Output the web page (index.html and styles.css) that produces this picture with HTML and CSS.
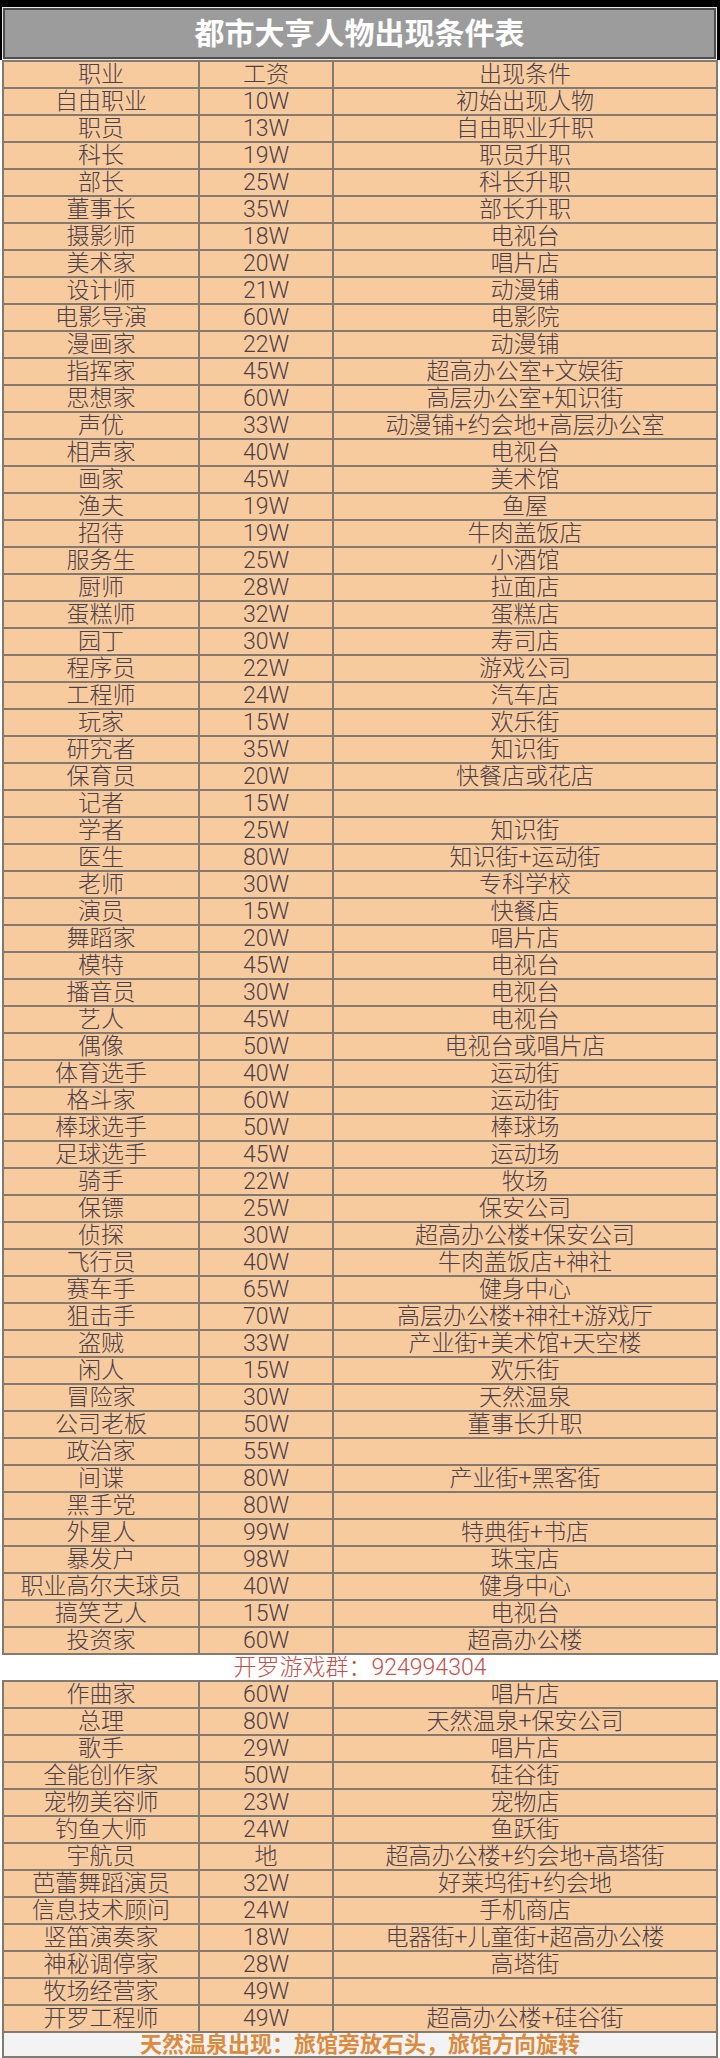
FILE: index.html
```html
<!DOCTYPE html>
<html lang="zh-CN">
<head>
<meta charset="utf-8">
<title>都市大亨人物出现条件表</title>
<link rel="stylesheet" href="styles.css">
</head>
<body>
<div class="frame">
  <div class="title"><div class="title-inner">都市大亨人物出现条件表</div></div>
</div>
<div class="tbl">
  <div class="row"><div class="c">职业</div><div class="c">工资</div><div class="c">出现条件</div></div>
  <div class="row"><div class="c">自由职业</div><div class="c">10W</div><div class="c">初始出现人物</div></div>
  <div class="row"><div class="c">职员</div><div class="c">13W</div><div class="c">自由职业升职</div></div>
  <div class="row"><div class="c">科长</div><div class="c">19W</div><div class="c">职员升职</div></div>
  <div class="row"><div class="c">部长</div><div class="c">25W</div><div class="c">科长升职</div></div>
  <div class="row"><div class="c">董事长</div><div class="c">35W</div><div class="c">部长升职</div></div>
  <div class="row"><div class="c">摄影师</div><div class="c">18W</div><div class="c">电视台</div></div>
  <div class="row"><div class="c">美术家</div><div class="c">20W</div><div class="c">唱片店</div></div>
  <div class="row"><div class="c">设计师</div><div class="c">21W</div><div class="c">动漫铺</div></div>
  <div class="row"><div class="c">电影导演</div><div class="c">60W</div><div class="c">电影院</div></div>
  <div class="row"><div class="c">漫画家</div><div class="c">22W</div><div class="c">动漫铺</div></div>
  <div class="row"><div class="c">指挥家</div><div class="c">45W</div><div class="c">超高办公室+文娱街</div></div>
  <div class="row"><div class="c">思想家</div><div class="c">60W</div><div class="c">高层办公室+知识街</div></div>
  <div class="row"><div class="c">声优</div><div class="c">33W</div><div class="c">动漫铺+约会地+高层办公室</div></div>
  <div class="row"><div class="c">相声家</div><div class="c">40W</div><div class="c">电视台</div></div>
  <div class="row"><div class="c">画家</div><div class="c">45W</div><div class="c">美术馆</div></div>
  <div class="row"><div class="c">渔夫</div><div class="c">19W</div><div class="c">鱼屋</div></div>
  <div class="row"><div class="c">招待</div><div class="c">19W</div><div class="c">牛肉盖饭店</div></div>
  <div class="row"><div class="c">服务生</div><div class="c">25W</div><div class="c">小酒馆</div></div>
  <div class="row"><div class="c">厨师</div><div class="c">28W</div><div class="c">拉面店</div></div>
  <div class="row"><div class="c">蛋糕师</div><div class="c">32W</div><div class="c">蛋糕店</div></div>
  <div class="row"><div class="c">园丁</div><div class="c">30W</div><div class="c">寿司店</div></div>
  <div class="row"><div class="c">程序员</div><div class="c">22W</div><div class="c">游戏公司</div></div>
  <div class="row"><div class="c">工程师</div><div class="c">24W</div><div class="c">汽车店</div></div>
  <div class="row"><div class="c">玩家</div><div class="c">15W</div><div class="c">欢乐街</div></div>
  <div class="row"><div class="c">研究者</div><div class="c">35W</div><div class="c">知识街</div></div>
  <div class="row"><div class="c">保育员</div><div class="c">20W</div><div class="c">快餐店或花店</div></div>
  <div class="row"><div class="c">记者</div><div class="c">15W</div><div class="c"></div></div>
  <div class="row"><div class="c">学者</div><div class="c">25W</div><div class="c">知识街</div></div>
  <div class="row"><div class="c">医生</div><div class="c">80W</div><div class="c">知识街+运动街</div></div>
  <div class="row"><div class="c">老师</div><div class="c">30W</div><div class="c">专科学校</div></div>
  <div class="row"><div class="c">演员</div><div class="c">15W</div><div class="c">快餐店</div></div>
  <div class="row"><div class="c">舞蹈家</div><div class="c">20W</div><div class="c">唱片店</div></div>
  <div class="row"><div class="c">模特</div><div class="c">45W</div><div class="c">电视台</div></div>
  <div class="row"><div class="c">播音员</div><div class="c">30W</div><div class="c">电视台</div></div>
  <div class="row"><div class="c">艺人</div><div class="c">45W</div><div class="c">电视台</div></div>
  <div class="row"><div class="c">偶像</div><div class="c">50W</div><div class="c">电视台或唱片店</div></div>
  <div class="row"><div class="c">体育选手</div><div class="c">40W</div><div class="c">运动街</div></div>
  <div class="row"><div class="c">格斗家</div><div class="c">60W</div><div class="c">运动街</div></div>
  <div class="row"><div class="c">棒球选手</div><div class="c">50W</div><div class="c">棒球场</div></div>
  <div class="row"><div class="c">足球选手</div><div class="c">45W</div><div class="c">运动场</div></div>
  <div class="row"><div class="c">骑手</div><div class="c">22W</div><div class="c">牧场</div></div>
  <div class="row"><div class="c">保镖</div><div class="c">25W</div><div class="c">保安公司</div></div>
  <div class="row"><div class="c">侦探</div><div class="c">30W</div><div class="c">超高办公楼+保安公司</div></div>
  <div class="row"><div class="c">飞行员</div><div class="c">40W</div><div class="c">牛肉盖饭店+神社</div></div>
  <div class="row"><div class="c">赛车手</div><div class="c">65W</div><div class="c">健身中心</div></div>
  <div class="row"><div class="c">狙击手</div><div class="c">70W</div><div class="c">高层办公楼+神社+游戏厅</div></div>
  <div class="row"><div class="c">盗贼</div><div class="c">33W</div><div class="c">产业街+美术馆+天空楼</div></div>
  <div class="row"><div class="c">闲人</div><div class="c">15W</div><div class="c">欢乐街</div></div>
  <div class="row"><div class="c">冒险家</div><div class="c">30W</div><div class="c">天然温泉</div></div>
  <div class="row"><div class="c">公司老板</div><div class="c">50W</div><div class="c">董事长升职</div></div>
  <div class="row"><div class="c">政治家</div><div class="c">55W</div><div class="c"></div></div>
  <div class="row"><div class="c">间谍</div><div class="c">80W</div><div class="c">产业街+黑客街</div></div>
  <div class="row"><div class="c">黑手党</div><div class="c">80W</div><div class="c"></div></div>
  <div class="row"><div class="c">外星人</div><div class="c">99W</div><div class="c">特典街+书店</div></div>
  <div class="row"><div class="c">暴发户</div><div class="c">98W</div><div class="c">珠宝店</div></div>
  <div class="row"><div class="c">职业高尔夫球员</div><div class="c">40W</div><div class="c">健身中心</div></div>
  <div class="row"><div class="c">搞笑艺人</div><div class="c">15W</div><div class="c">电视台</div></div>
  <div class="row"><div class="c">投资家</div><div class="c">60W</div><div class="c">超高办公楼</div></div>
</div>
<div class="group">开罗游戏群：924994304</div>
<div class="tbl">
  <div class="row"><div class="c">作曲家</div><div class="c">60W</div><div class="c">唱片店</div></div>
  <div class="row"><div class="c">总理</div><div class="c">80W</div><div class="c">天然温泉+保安公司</div></div>
  <div class="row"><div class="c">歌手</div><div class="c">29W</div><div class="c">唱片店</div></div>
  <div class="row"><div class="c">全能创作家</div><div class="c">50W</div><div class="c">硅谷街</div></div>
  <div class="row"><div class="c">宠物美容师</div><div class="c">23W</div><div class="c">宠物店</div></div>
  <div class="row"><div class="c">钓鱼大师</div><div class="c">24W</div><div class="c">鱼跃街</div></div>
  <div class="row"><div class="c">宇航员</div><div class="c">地</div><div class="c">超高办公楼+约会地+高塔街</div></div>
  <div class="row"><div class="c">芭蕾舞蹈演员</div><div class="c">32W</div><div class="c">好莱坞街+约会地</div></div>
  <div class="row"><div class="c">信息技术顾问</div><div class="c">24W</div><div class="c">手机商店</div></div>
  <div class="row"><div class="c">竖笛演奏家</div><div class="c">18W</div><div class="c">电器街+儿童街+超高办公楼</div></div>
  <div class="row"><div class="c">神秘调停家</div><div class="c">28W</div><div class="c">高塔街</div></div>
  <div class="row"><div class="c">牧场经营家</div><div class="c">49W</div><div class="c"></div></div>
  <div class="row"><div class="c">开罗工程师</div><div class="c">49W</div><div class="c">超高办公楼+硅谷街</div></div>
</div>
<div class="note">天然温泉出现：旅馆旁放石头，旅馆方向旋转</div>
</body>
</html>
```
FILE: styles.css
```css
html, body {
  margin: 0;
  padding: 0;
  background: #ffffff;
}
body {
  width: 720px;
  font-family: Roboto, "Noto Sans CJK SC", sans-serif;
  color: #4a404a;
}
.frame {
  background: #000000;
  padding: 7px 3px 0 2px;
}
.title {
  border: 1px solid #e8e8e8;
}
.title-inner {
  height: 47px;
  border: 2px solid #4e4e4e;
  background: #9c9c9c;
  color: #ffffff;
  font-size: 30px;
  font-weight: bold;
  line-height: 47px;
  text-align: center;
}
.tbl {
  margin-left: 2px;
  width: 716px;
  box-sizing: border-box;
  border-left: 2px solid #857a70;
  border-top: 2px solid #857a70;
  background: #f8cb9f;
}
.row {
  display: grid;
  grid-template-columns: 196px 134px 384px;
}
.c {
  height: 27px;
  box-sizing: border-box;
  border-right: 2px solid #857a70;
  border-bottom: 2px solid #857a70;
  text-align: center;
  font-size: 23px;
  font-weight: 300;
  line-height: 25px;
  white-space: nowrap;
}
.group {
  height: 25px;
  line-height: 25px;
  text-align: center;
  font-size: 23px;
  font-weight: 300;
  color: #c4504a;
}
.note {
  margin-left: 2px;
  width: 716px;
  height: 25px;
  box-sizing: border-box;
  border: 2px solid #857a70;
  border-top: 0;
  background: #f3f3f3;
  color: #dc8a3d;
  font-size: 22px;
  font-weight: bold;
  line-height: 23px;
  text-align: center;
}
```
